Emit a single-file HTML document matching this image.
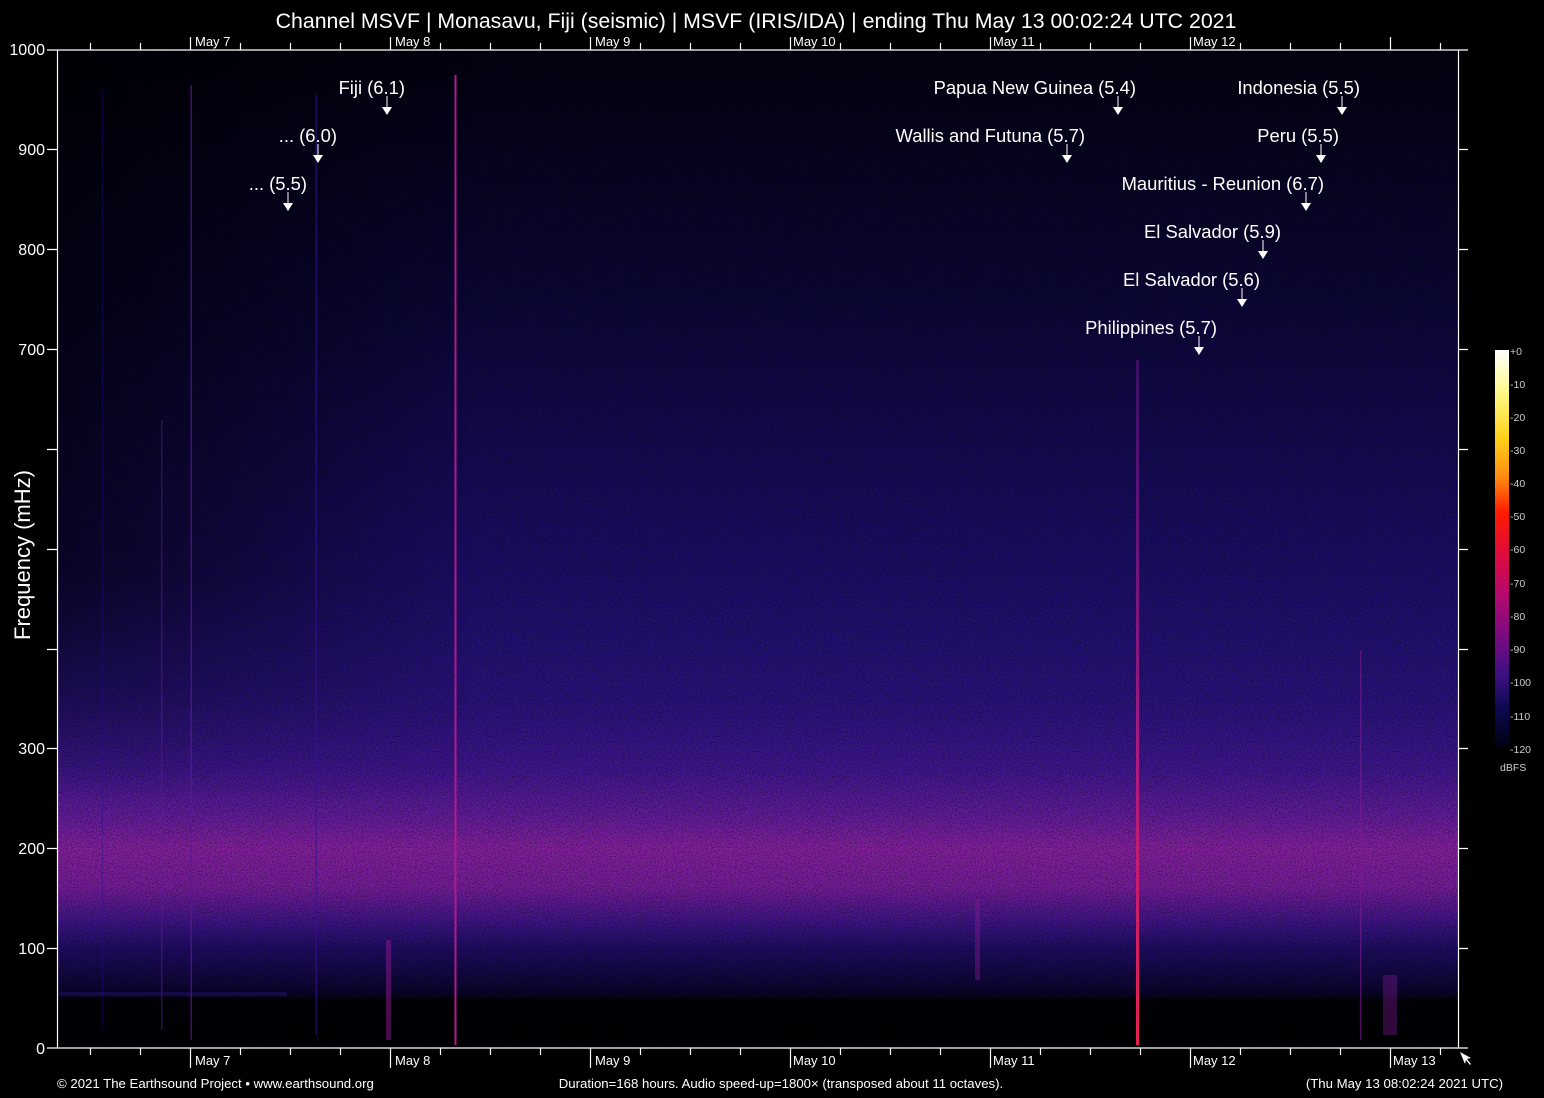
<!DOCTYPE html>
<html><head><meta charset="utf-8"><style>
html,body{margin:0;padding:0;background:#000;width:1544px;height:1098px;overflow:hidden}
svg{display:block;font-family:"Liberation Sans",Arial,sans-serif}
</style></head><body>
<svg width="1544" height="1098" viewBox="0 0 1544 1098" xmlns="http://www.w3.org/2000/svg">
<defs>
<linearGradient id="bg" x1="0" y1="49" x2="0" y2="1048" gradientUnits="userSpaceOnUse">
<stop offset="0" stop-color="#03020f"/>
<stop offset="0.25" stop-color="#0b0735"/>
<stop offset="0.5" stop-color="#190d62"/>
<stop offset="0.65" stop-color="#281278"/>
<stop offset="0.72" stop-color="#3c168a"/>
<stop offset="0.77" stop-color="#621c96"/>
<stop offset="0.8" stop-color="#80209a"/>
<stop offset="0.84" stop-color="#701c94"/>
<stop offset="0.875" stop-color="#3a1480"/>
<stop offset="0.9" stop-color="#1e0c60"/>
<stop offset="0.94" stop-color="#0c0530"/>
<stop offset="0.955" stop-color="#030110"/>
<stop offset="1" stop-color="#020108"/>
</linearGradient>
<linearGradient id="lft" x1="57" y1="0" x2="470" y2="0" gradientUnits="userSpaceOnUse">
<stop offset="0" stop-color="#000" stop-opacity="0.6"/>
<stop offset="1" stop-color="#000" stop-opacity="0"/>
</linearGradient>
<linearGradient id="lftv" x1="0" y1="49" x2="0" y2="800" gradientUnits="userSpaceOnUse">
<stop offset="0" stop-color="#fff"/>
<stop offset="0.7" stop-color="#fff"/>
<stop offset="1" stop-color="#000"/>
</linearGradient>
<linearGradient id="ln" x1="0" y1="360" x2="0" y2="1045" gradientUnits="userSpaceOnUse">
<stop offset="0" stop-color="#6a1690" stop-opacity="0.5"/>
<stop offset="0.6" stop-color="#b01a80"/>
<stop offset="1" stop-color="#e82050"/>
</linearGradient>
<mask id="lm"><rect x="57" y="49" width="420" height="760" fill="url(#lftv)"/></mask>
<linearGradient id="cb" x1="0" y1="350" x2="0" y2="748" gradientUnits="userSpaceOnUse">
<stop offset="0" stop-color="#ffffff"/>
<stop offset="0.1" stop-color="#fffb90"/>
<stop offset="0.22" stop-color="#ffd21a"/>
<stop offset="0.32" stop-color="#ff8a10"/>
<stop offset="0.41" stop-color="#ff1a00"/>
<stop offset="0.52" stop-color="#dc0a40"/>
<stop offset="0.62" stop-color="#b00a70"/>
<stop offset="0.72" stop-color="#7a0a80"/>
<stop offset="0.82" stop-color="#3a1080"/>
<stop offset="0.9" stop-color="#0c0a50"/>
<stop offset="1" stop-color="#000010"/>
</linearGradient>
<filter id="nz" x="0" y="0" width="100%" height="100%">
<feTurbulence type="fractalNoise" baseFrequency="0.8" numOctaves="1" seed="3"/>
<feColorMatrix values="0 0 0 0 0  0 0 0 0 0  0 0 0 0 0  0 0 0 -3 1.6"/>
</filter>
</defs>
<rect x="57" y="49" width="1401" height="999" fill="url(#bg)"/>
<rect x="57" y="49" width="420" height="760" fill="url(#lft)" mask="url(#lm)"/>
<rect x="57" y="49" width="1401" height="999" filter="url(#nz)" opacity="0.5"/>
<rect x="57" y="998" width="1401" height="47" fill="#000" opacity="0.6"/>
<g>
<rect x="190.5" y="85" width="1.5" height="955" fill="#5a189a" opacity="0.7"/>
<rect x="454.5" y="75" width="2" height="970" fill="#b01a8a"/>
<rect x="1136" y="360" width="3" height="685" fill="url(#ln)"/>
<rect x="315.5" y="95" width="1.5" height="940" fill="#3a1290" opacity="0.6"/>
<rect x="161" y="420" width="1.5" height="610" fill="#5a1a90" opacity="0.5"/>
<rect x="102" y="90" width="1" height="940" fill="#20108a" opacity="0.4"/>
<rect x="1360" y="650" width="1.5" height="390" fill="#7a1a90" opacity="0.6"/>
<rect x="386" y="940" width="5" height="100" fill="#8a1a90" opacity="0.5"/>
<rect x="975" y="900" width="5" height="80" fill="#8a1a90" opacity="0.4"/>
<rect x="1383" y="975" width="14" height="60" fill="#7a1a90" opacity="0.4"/>
<rect x="57" y="992" width="230" height="4" fill="#2a1480" opacity="0.4"/>
</g>
<g stroke="#fff" stroke-width="1.2" fill="none">
<line x1="47" y1="50" x2="1468" y2="50"/>
<line x1="47" y1="1048" x2="1468" y2="1048"/>
<line x1="57.5" y1="50" x2="57.5" y2="1048"/>
<line x1="1458.5" y1="50" x2="1458.5" y2="1048"/>
<path d="M47 149.5h10M47 249.5h10M47 349.5h10M47 449.5h10M47 549.5h10M47 649.5h10M47 748.5h10M47 848.5h10M47 948.5h10"/>
<path d="M1458 149.5h10M1458 249.5h10M1458 349.5h10M1458 449.5h10M1458 549.5h10M1458 649.5h10M1458 748.5h10M1458 848.5h10M1458 948.5h10"/>
<path d="M90.5 50v-7M140.5 50v-7M240.5 50v-7M290.5 50v-7M340.5 50v-7M440.5 50v-7M490.5 50v-7M540.5 50v-7M640.5 50v-7M690.5 50v-7M740.5 50v-7M840.5 50v-7M890.5 50v-7M940.5 50v-7M1040.5 50v-7M1090.5 50v-7M1140.5 50v-7M1240.5 50v-7M1290.5 50v-7M1340.5 50v-7M1440.5 50v-7"/>
<path d="M190.5 50v-13M390.5 50v-13M590.5 50v-13M790.5 50v-13M990.5 50v-13M1190.5 50v-13M1390.5 50v-13"/>
<path d="M90.5 1048v7M140.5 1048v7M240.5 1048v7M290.5 1048v7M340.5 1048v7M440.5 1048v7M490.5 1048v7M540.5 1048v7M640.5 1048v7M690.5 1048v7M740.5 1048v7M840.5 1048v7M890.5 1048v7M940.5 1048v7M1040.5 1048v7M1090.5 1048v7M1140.5 1048v7M1240.5 1048v7M1290.5 1048v7M1340.5 1048v7M1440.5 1048v7"/>
<path d="M190.5 1048v20M390.5 1048v20M590.5 1048v20M790.5 1048v20M990.5 1048v20M1190.5 1048v20M1390.5 1048v20"/>
</g>
<line x1="58" y1="1047.5" x2="1458" y2="1047.5" stroke="#e070e0" stroke-width="1"/>
<path d="M1460 1052l5 12 1-4 4 5 1-1-4-5 4-1z" fill="#fff"/>
<g fill="#fff" font-size="16" text-anchor="end">
<text x="45" y="55">1000</text><text x="45" y="155">900</text><text x="45" y="255">800</text><text x="45" y="355">700</text>
<text x="45" y="754">300</text><text x="45" y="854">200</text><text x="45" y="954">100</text><text x="45" y="1054">0</text>
</g>
<text transform="translate(30,555) rotate(-90)" fill="#fff" font-size="22" text-anchor="middle">Frequency (mHz)</text>
<text x="756" y="28" fill="#fff" font-size="21.3" text-anchor="middle">Channel MSVF | Monasavu, Fiji (seismic) | MSVF (IRIS/IDA) | ending Thu May 13 00:02:24 UTC 2021</text>
<g fill="#fff" font-size="13" xml:space="preserve">
<text x="195" y="46">May  7</text><text x="395" y="46">May  8</text><text x="595" y="46">May  9</text><text x="793" y="46">May 10</text><text x="993" y="46">May 11</text><text x="1193" y="46">May 12</text>
<text x="195" y="1065">May  7</text><text x="395" y="1065">May  8</text><text x="595" y="1065">May  9</text><text x="793" y="1065">May 10</text><text x="993" y="1065">May 11</text><text x="1193" y="1065">May 12</text><text x="1393" y="1065">May 13</text>
</g>
<g fill="#fff" font-size="13.2">
<text x="57" y="1088">© 2021 The Earthsound Project • www.earthsound.org</text>
<text x="781" y="1088" text-anchor="middle">Duration=168 hours. Audio speed-up=1800× (transposed about 11 octaves).</text>
<text x="1503" y="1088" text-anchor="end">(Thu May 13 08:02:24 2021 UTC)</text>
</g>
<rect x="1495" y="350" width="14" height="398" fill="url(#cb)"/>
<g fill="#ccc" font-size="10.5">
<text x="1510" y="355">+0</text><text x="1510" y="388">-10</text><text x="1510" y="421">-20</text><text x="1510" y="454">-30</text><text x="1510" y="487">-40</text><text x="1510" y="520">-50</text><text x="1510" y="553">-60</text><text x="1510" y="587">-70</text><text x="1510" y="620">-80</text><text x="1510" y="653">-90</text><text x="1510" y="686">-100</text><text x="1510" y="720">-110</text><text x="1510" y="753">-120</text>
<text x="1500" y="771">dBFS</text>
</g>
<g fill="#fff" font-size="18.4" text-anchor="end">
<text x="405" y="94">Fiji (6.1)</text>
<text x="337" y="142">... (6.0)</text>
<text x="307" y="190">... (5.5)</text>
<text x="1136" y="94">Papua New Guinea (5.4)</text>
<text x="1085" y="142">Wallis and Futuna (5.7)</text>
<text x="1360" y="94">Indonesia (5.5)</text>
<text x="1339" y="142">Peru (5.5)</text>
<text x="1324" y="190">Mauritius - Reunion (6.7)</text>
<text x="1281" y="238">El Salvador (5.9)</text>
<text x="1260" y="286">El Salvador (5.6)</text>
<text x="1217" y="334">Philippines (5.7)</text>
</g>
<g fill="#fff" stroke="#fff" stroke-width="1">
<path d="M387 96v11"/><path d="M382 107h10l-5 8z" stroke="none"/>
<path d="M318 144v11"/><path d="M313 155h10l-5 8z" stroke="none"/>
<path d="M288 192v11"/><path d="M283 203h10l-5 8z" stroke="none"/>
<path d="M1118 96v11"/><path d="M1113 107h10l-5 8z" stroke="none"/>
<path d="M1067 144v11"/><path d="M1062 155h10l-5 8z" stroke="none"/>
<path d="M1342 96v11"/><path d="M1337 107h10l-5 8z" stroke="none"/>
<path d="M1321 144v11"/><path d="M1316 155h10l-5 8z" stroke="none"/>
<path d="M1306 192v11"/><path d="M1301 203h10l-5 8z" stroke="none"/>
<path d="M1263 240v11"/><path d="M1258 251h10l-5 8z" stroke="none"/>
<path d="M1242 288v11"/><path d="M1237 299h10l-5 8z" stroke="none"/>
<path d="M1199 336v11"/><path d="M1194 347h10l-5 8z" stroke="none"/>
</g>
</svg>
</body></html>
